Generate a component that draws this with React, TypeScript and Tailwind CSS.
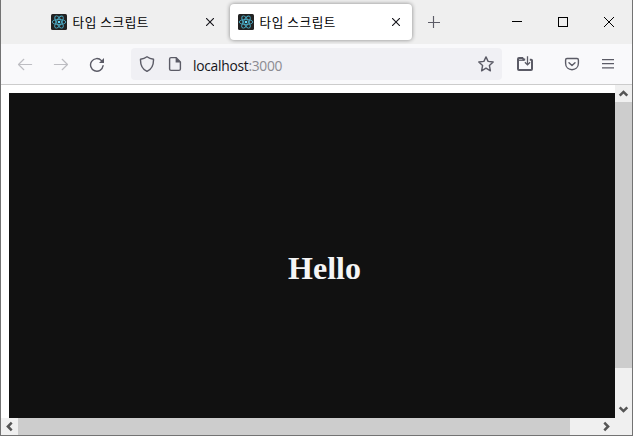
import React from "react";

function ReactLogo() {
  return (
    <svg width="16" height="16" viewBox="0 0 16 16" className="shrink-0">
      <rect width="16" height="16" rx="1.5" fill="#222222" />
      <g fill="none" stroke="#4ba9c2" strokeWidth="0.9">
        <ellipse cx="8" cy="8" rx="6.8" ry="2.6" />
        <ellipse cx="8" cy="8" rx="6.8" ry="2.6" transform="rotate(60 8 8)" />
        <ellipse cx="8" cy="8" rx="6.8" ry="2.6" transform="rotate(120 8 8)" />
      </g>
      <circle cx="8" cy="8" r="1.3" fill="#61dafb" />
    </svg>
  );
}

function Tab({ active = false }: { active?: boolean }) {
  return (
    <div
      className={
        active
          ? "flex h-9 w-[182px] items-center rounded bg-white pl-2 pr-3 shadow-[0_0_4px_rgba(0,0,0,0.45)]"
          : "flex h-9 w-[183px] items-center pl-2 pr-3"
      }
    >
      <ReactLogo />
      <span className="ml-[5.5px] flex-1 whitespace-nowrap text-[12.6px] leading-4 tracking-[0.6px] text-black">타입 스크립트</span>
      <svg width="8" height="8" viewBox="0 0 8 8" stroke="#15141a" strokeWidth="1.1">
        <path d="M0 0L8 8M8 0L0 8" />
      </svg>
    </div>
  );
}

function Chevron({ angle }: { angle: number }) {
  return (
    <svg width="17" height="17" viewBox="0 0 17 17" fill="none" stroke="#555555" strokeWidth="2.5" className="shrink-0">
      <path d="M4.7 10.7L8.5 6.9L12.3 10.7" transform={`rotate(${angle} 8.5 8.5)`} />
    </svg>
  );
}

function TabStrip() {
  return (
    <header className="flex h-11 bg-[#efefef] pt-1">
      <div className="ml-[42px] flex gap-1">
        <Tab />
        <Tab active />
      </div>
      <svg width="12" height="12" viewBox="0 0 12 12" stroke="#5b5b66" strokeWidth="1.15" className="ml-4 mt-3">
        <path d="M5.5 0V12M0 6.5H12" />
      </svg>
      <div className="ml-auto mr-[18px] mt-3 flex h-3 items-center gap-9">
        <svg width="10" height="12" viewBox="0 0 10 12"><path d="M0 5.5H10" stroke="#000" /></svg>
        <svg width="10" height="10" viewBox="0 0 10 10"><rect x=".5" y=".5" width="9" height="9" fill="none" stroke="#000" /></svg>
        <svg width="10" height="10" viewBox="0 0 10 10"><path d="M0 0L10 10M10 0L0 10" stroke="#000" /></svg>
      </div>
    </header>
  );
}

function Toolbar() {
  return (
    <nav className="flex h-[41px] items-center border-b border-[#cccccc] bg-[#f9f9fb] pl-4 pr-4">
      <svg width="16" height="16" viewBox="0 0 16 16" fill="none" stroke="#bdbdc2" strokeWidth="1.2" strokeLinecap="round" strokeLinejoin="round">
        <path d="M14.6 8.5H1.6M6.8 3.3L1.5 8.5L6.8 13.7" />
      </svg>
      <svg width="16" height="16" viewBox="0 0 16 16" fill="none" stroke="#bdbdc2" strokeWidth="1.2" strokeLinecap="round" strokeLinejoin="round" className="ml-5">
        <path d="M1.4 8.5H14.4M9.2 3.3L14.5 8.5L9.2 13.7" />
      </svg>
      <svg width="16" height="16" viewBox="0 0 16 16" fill="none" stroke="#5b5b66" strokeWidth="1.4" strokeLinecap="round" className="ml-5">
        <path d="M14.1 9.7A6.3 6.3 0 1 1 12.5 4.6L13.5 5.6" />
        <path d="M15 2V7H10Z" fill="#5b5b66" stroke="none" />
      </svg>
      <div className="ml-[26px] flex h-8 w-[371px] items-center rounded bg-[#f0f0f4] px-2">
        <svg width="16" height="16" viewBox="0 0 16 16" fill="none" stroke="#5b5b66" strokeWidth="1.4" strokeLinejoin="round">
          <path d="M8 .8C6 2.2 3.9 2.9 1.5 3.2C1.3 8.7 3 13.2 8 15.4C13 13.2 14.7 8.7 14.5 3.2C12.1 2.9 10 2.2 8 .8Z" />
        </svg>
        <svg width="16" height="16" viewBox="0 0 16 16" fill="none" stroke="#5b5b66" strokeWidth="1.4" strokeLinejoin="round" className="ml-3">
          <path d="M9 1.6H4Q2.6 1.6 2.6 3V13Q2.6 14.4 4 14.4H12Q13.4 14.4 13.4 13V6Z" />
          <path d="M8.6 1.3V6.4H13.7Z" fill="#5b5b66" stroke="none" />
        </svg>
        <span className="ml-2.5 mt-[3px] flex-1 whitespace-nowrap font-['Open_Sans','Noto_Sans',sans-serif] text-[13.8px] leading-5 tracking-[-0.27px] text-[#15141a]">
          localhost<span className="text-[#8b8b91]">:3000</span>
        </span>
        <svg width="16" height="16" viewBox="0 0 16 16" fill="none" stroke="#5b5b66" strokeWidth="1.4" strokeLinejoin="round">
          <path d="M8 .9L10.1 5.4L15.2 6L11.4 9.5L12.4 14.8L8 12.2L3.6 14.8L4.6 9.5L.8 6L5.9 5.4Z" />
        </svg>
      </div>
      <svg width="16" height="16" viewBox="0 0 16 16" fill="none" stroke="#5b5b66" className="ml-[15px]">
        <path d="M8.2 3.6H6.6L5.4 2H2Q1 2 1 3V13Q1 14 2 14H14Q15 14 15 13V4.6Q15 3.7 14.2 3.7H12.8" strokeWidth="2" />
        <path d="M1 4.2H7.4" strokeWidth="1.3" />
        <path d="M10.5 .2V8.8M7.9 6.3L10.5 8.9L13.1 6.3" strokeWidth="1.3" />
      </svg>
      <svg width="16" height="16" viewBox="0 0 16 16" fill="none" stroke="#5b5b66" strokeWidth="1.4" strokeLinecap="round" strokeLinejoin="round" className="ml-[31px]">
        <path d="M3 2.5H13Q14.4 2.5 14.4 3.9V7.3C14.4 15.8 1.6 15.8 1.6 7.3V3.9Q1.6 2.5 3 2.5Z" />
        <path d="M5 6.7L8 9.5L11 6.7" />
      </svg>
      <svg width="12" height="12" viewBox="0 0 12 12" stroke="#5b5b66" strokeWidth="1.25" className="ml-[22px]">
        <path d="M0 1.5H12M0 5.5H12M0 9.8H12" />
      </svg>
    </nav>
  );
}

export default function App() {
  return (
    <div className="flex h-[436px] w-[633px] flex-col overflow-hidden border-x border-b border-[#737373] bg-white font-['Noto_Sans_CJK_KR',sans-serif]">
      <TabStrip />
      <Toolbar />
      <div className="flex min-h-0 flex-1">
        <main className="flex flex-1 pl-2 pt-2">
          <div className="flex flex-1 items-center justify-center bg-[#111111] pb-px pl-[25px]">
            <h1 className="mt-[26px] font-['Liberation_Serif',serif] text-[32px] font-bold leading-9 text-[#f5f5f5]">Hello</h1>
          </div>
        </main>
        <div className="flex w-[17px] flex-col bg-[#f0f0f0]">
          <Chevron angle={0} />
          <div className="h-[266px] bg-[#cdcdcd]" />
          <div className="mt-auto flex"><Chevron angle={180} /></div>
        </div>
      </div>
      <div className="flex h-[17px] bg-[#f0f0f0]">
        <Chevron angle={-90} />
        <div className="w-[552px] bg-[#cdcdcd]" />
        <div className="ml-auto mr-[17px] flex"><Chevron angle={90} /></div>
      </div>
    </div>
  );
}
